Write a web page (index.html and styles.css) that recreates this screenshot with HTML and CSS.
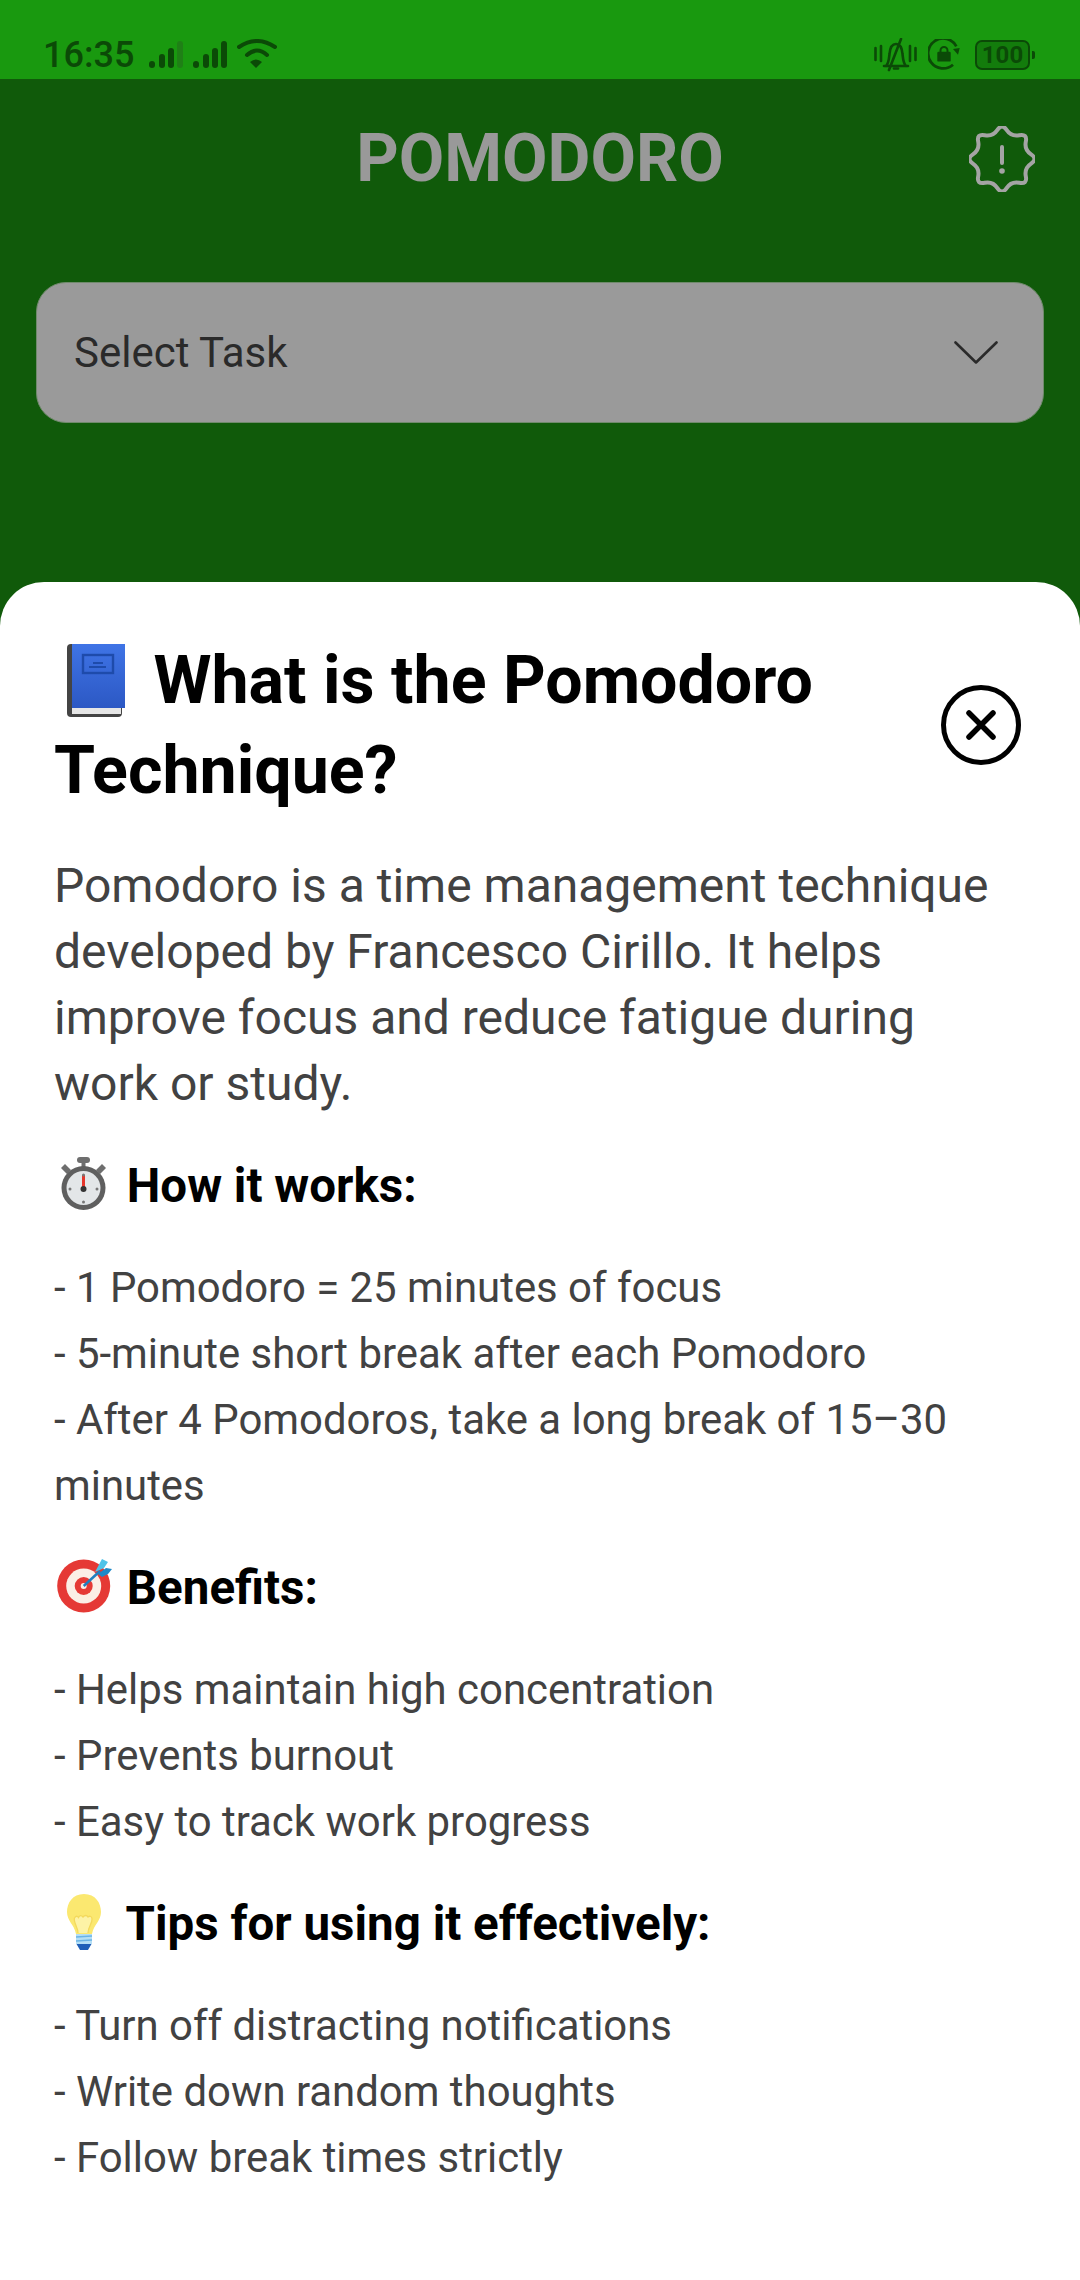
FILE: index.html
```html
<!DOCTYPE html>
<html lang="en">
<head>
<meta charset="utf-8">
<title>Pomodoro</title>
<link rel="stylesheet" href="styles.css">
</head>
<body>
<div class="app">
  <div class="status">
    <div class="status-left">
      <span class="time">16:35</span>
      <svg class="signal" width="34" height="27" viewBox="0 0 34 27"><rect x="0" y="20" width="6" height="7" rx="3" fill="#0b4a07"/><rect x="10" y="13" width="6" height="14" rx="3" fill="#0b4a07"/><rect x="19" y="7" width="6" height="20" rx="3" fill="#0b4a07"/><rect x="28" y="0" width="6" height="27" rx="3" fill="#1f8016"/></svg>
      <svg class="signal second" width="34" height="27" viewBox="0 0 34 27"><rect x="0" y="20" width="6" height="7" rx="3" fill="#0b4a07"/><rect x="10" y="13" width="6" height="14" rx="3" fill="#0b4a07"/><rect x="19" y="7" width="6" height="20" rx="3" fill="#0b4a07"/><rect x="28" y="0" width="6" height="27" rx="3" fill="#0b4a07"/></svg>
      <svg class="wifi" width="40" height="29" viewBox="0 0 40 29" fill="none" stroke="#0b4a07" stroke-width="4" stroke-linecap="round"><path d="M2 8Q20-4 38 8"/><path d="M10 16Q20 7 30 16"/><path d="M13 23Q19 18 25 23L19 29Z" fill="#0b4a07" stroke="none"/></svg>
    </div>
    <div class="status-right">
      <svg width="43" height="34" viewBox="0 0 43 34" fill="none" stroke="#0b4a07" stroke-width="2.600" stroke-linecap="round" stroke-linejoin="round"><path d="M1.500 10v12M7 8v15M36 8v15M41.500 10v12"/><path d="M10 28h24M12 28c3-3 3-8 3.500-12 .5-6 3-10 6.500-10s6 4 6.500 10c.5 4 .5 9 3.500 12"/><path d="M20 30.500h4"/><path d="M27 1L15 32"/></svg>
      <svg width="34" height="32" viewBox="0 0 34 32" fill="none"><path d="M28.300 7.300A15 15 0 1 0 25 25.700" stroke="#0b4a07" stroke-width="2.800"/><path d="M25 10l6.700-1-1.700 6.700z" fill="#0b4a07"/><rect x="9.300" y="12.800" width="13.400" height="9.800" rx="1.200" fill="#0b4a07"/><path d="M12.500 13V11.500a3.500 3.500 0 0 1 7 0V13" stroke="#0b4a07" stroke-width="2"/></svg>
      <div class="battery"><span class="battery-body">100</span><span class="battery-tip"></span></div>
    </div>
  </div>
  <header class="header">
    <h1 class="brand">POMODORO</h1>
    <svg class="badge" width="66" height="66" viewBox="-33 -33 66 66" fill="none" stroke="#a4a4a4" stroke-width="4" stroke-linejoin="round"><path d="M4.590-29.090Q9.180-22.170 17.320-23.820Q25.460-25.460 23.820-17.320Q22.170-9.180 29.090-4.590Q36 0 29.090 4.590Q22.170 9.180 23.820 17.320Q25.460 25.460 17.320 23.820Q9.180 22.170 4.590 29.090Q0 36-4.590 29.090Q-9.180 22.170-17.320 23.820Q-25.460 25.460-23.820 17.320Q-22.170 9.180-29.090 4.590Q-36 0-29.090-4.590Q-22.170-9.180-23.820-17.320Q-25.460-25.460-17.320-23.820Q-9.180-22.170-4.590-29.090Q0-36 4.590-29.090Z"/><path d="M0-12V4" stroke-linecap="round"/><circle cx="0" cy="12" r="2.800" fill="#a4a4a4" stroke="none"/></svg>
  </header>
  <div class="select">
    <span>Select Task</span>
    <svg width="44" height="23" viewBox="0 0 44 23" fill="none" stroke="#2a2a2a" stroke-width="2.600" stroke-linecap="round" stroke-linejoin="round"><path d="M1.500 1.500L22 21.500 42.500 1.500"/></svg>
  </div>
  <section class="sheet">
    <div class="sheet-head">
      <h2 class="sheet-title"><svg class="book" width="58" height="73" viewBox="0 0 58 73"><defs><linearGradient id="cover" x1="0" y1="0" x2="0" y2="1"><stop offset="0" stop-color="#3f74e6"/><stop offset="1" stop-color="#2c58c4"/></linearGradient></defs><rect x="0" y="0" width="55" height="73" rx="4" fill="#444"/><rect x="5" y="64" width="49" height="6" fill="#e6e6e6"/><rect x="5" y="0" width="53" height="64" fill="url(#cover)"/><rect x="16" y="11" width="30" height="18" fill="none" stroke="#1e4bab" stroke-width="2.400"/><path d="M26 19h10M22 23h17" stroke="#1e4bab" stroke-width="2"/></svg> What is the Pomodoro Technique?</h2>
      <svg class="close" width="80" height="80" viewBox="0 0 80 80" fill="none" stroke="#000" stroke-linecap="round"><circle cx="40" cy="40" r="37.500" stroke-width="5"/><path d="M28 28l24 24M52 28L28 52" stroke-width="5.500"/></svg>
    </div>
    <p class="intro">Pomodoro is a time management technique developed by Francesco Cirillo. It helps improve focus and reduce fatigue during work or study.</p>

    <h3 class="topic"><svg class="emoji" width="61" height="56" viewBox="0 0 61 56"><rect x="23" y="1" width="13" height="6" rx="3" fill="#6e6e6e"/><rect x="27.500" y="6" width="4" height="5" fill="#6e6e6e"/><path d="M7 12l4-4 6 6-4 4zM52 12l-4-4-6 6 4 4z" fill="#6e6e6e"/><circle cx="29.500" cy="32" r="22" fill="#5f5f5f"/><circle cx="29.500" cy="32" r="17" fill="#e3e6e8"/><rect x="28" y="19" width="3" height="13" fill="#e5352b"/><circle cx="29.500" cy="33" r="3" fill="#333"/><circle cx="29.500" cy="19" r="1.500" fill="#777"/><circle cx="29.500" cy="46" r="1.500" fill="#777"/><circle cx="16" cy="33" r="1.500" fill="#777"/><circle cx="43" cy="33" r="1.500" fill="#777"/></svg> How it works:</h3>
    <ul class="list">
      <li>- 1 Pomodoro = 25 minutes of focus</li>
      <li>- 5-minute short break after each Pomodoro</li>
      <li>- After 4 Pomodoros, take a long break of 15–30 minutes</li>
    </ul>

    <h3 class="topic"><svg class="emoji" width="61" height="56" viewBox="0 0 61 56"><circle cx="29.700" cy="28" r="26.500" fill="#e53935"/><circle cx="29.700" cy="28" r="17.500" fill="#fbefe6"/><circle cx="29.700" cy="28" r="9" fill="#e53935"/><circle cx="29.700" cy="28" r="3" fill="#fbefe6"/><path d="M29.700 28L46 13" stroke="#1f7fc0" stroke-width="2.500"/><path d="M41 14L48 1l6 3-4 6z" fill="#4fc3e8"/><path d="M44 16l8-6 6 1-4 5-6 3z" fill="#1e88c8"/></svg> Benefits:</h3>
    <ul class="list">
      <li>- Helps maintain high concentration</li>
      <li>- Prevents burnout</li>
      <li>- Easy to track work progress</li>
    </ul>

    <h3 class="topic"><svg class="emoji" width="61" height="56" viewBox="0 0 61 56"><path d="M30 0C18.500 0 13 9 13 18 13 27 20 30 22 40H38C40 30 47 27 47 18 47 9 41.500 0 30 0Z" fill="#fbe870"/><path d="M24 39c0-6-5-11-3.500-15 1.500-2.500 3-2 4-.5 1-2.500 3-2.500 4.500-.5 1.500-2 4-2 5 0 2-1.500 4-.5 4 2 .5 4-4 8-4 14" fill="#fdf3a6" stroke="#f3d95c" stroke-width="1.300"/><rect x="22" y="40" width="16" height="10" fill="#b5dff5"/><path d="M22 43l16-1M22 47l16-1" stroke="#6bb4e6" stroke-width="1.600"/><path d="M22.500 50H37.500L34 56H26Z" fill="#1f5fb8"/></svg> Tips for using it effectively:</h3>
    <ul class="list">
      <li>- Turn off distracting notifications</li>
      <li>- Write down random thoughts</li>
      <li>- Follow break times strictly</li>
    </ul>
  </section>
</div>
</body>
</html>
```
FILE: styles.css
```css
* { box-sizing: border-box; }
html, body { margin: 0; padding: 0; }
body { font-family: Roboto, "Liberation Sans", sans-serif; background: #105a0a; }
.app { width: 1080px; height: 2280px; display: flex; flex-direction: column; background: #105a0a; overflow: hidden; }

.status { height: 79px; flex: none; background: #19990f; color: #0b4a07; display: flex; justify-content: space-between; align-items: flex-end; padding: 0 45px 0 43px; }
.status-left { display: flex; align-items: flex-end; padding-bottom: 11px; }
.time { font-size: 36px; line-height: 26px; font-weight: 500; margin-right: 15px; }
.signal.second { margin-left: 10px; }
.wifi { margin-left: 10px; }
.status-right { display: flex; align-items: center; gap: 11px; padding-bottom: 7px; }
.battery { display: flex; align-items: center; margin-left: 2px; }
.battery-body { width: 55px; height: 30px; border: 2px solid #0b4a07; border-radius: 7px; background: #137c0c; font-size: 24px; line-height: 26px; font-weight: 700; text-align: center; }
.battery-tip { width: 3px; height: 8px; background: #0b4a07; margin-left: 2px; border-radius: 0 2px 2px 0; }

.header { height: 203px; flex: none; display: flex; align-items: flex-start; justify-content: center; position: relative; }
.brand { margin: 45px 0 0; font-size: 66px; line-height: 70px; font-weight: 700; color: #999; }
.badge { position: absolute; right: 45px; top: 47px; }

.select { flex: none; height: 141px; margin: 0 36px; background: #9a9a9a; border: 1px solid #708a6c; border-radius: 30px; display: flex; align-items: center; justify-content: space-between; padding: 0 45px 0 37px; color: #2a2a2a; font-size: 42px; }

.sheet { flex: 1; margin-top: 159px; background: #fff; border-radius: 44px 44px 0 0; padding: 53px 54px 0; }
.sheet-head { display: flex; align-items: center; justify-content: space-between; }
.sheet-title { margin: 0; width: 820px; font-size: 66.3px; line-height: 90px; font-weight: 700; color: #000; }
.book { vertical-align: -14px; margin-left: 13px; margin-right: 12px; }
.close { flex: none; margin-right: 5px; }
.intro { margin: 38px 0 0; font-size: 48px; line-height: 66px; color: #424242; }
.topic { margin: 36px 0 0; font-size: 47.5px; line-height: 66px; font-weight: 700; color: #000; }
.emoji { vertical-align: -10px; }
.list { list-style: none; margin: 36px 0 0; padding: 0; font-size: 41.9px; line-height: 66px; color: #424242; }
```
